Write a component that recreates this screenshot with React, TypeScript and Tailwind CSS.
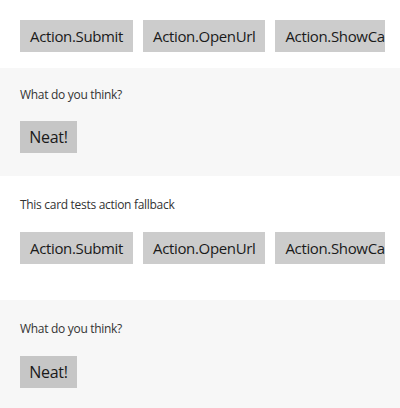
import React from "react";

const font = { fontFamily: '"Open Sans", "Noto Sans", sans-serif' };

function ActionRow() {
  return (
    <div className="flex gap-[10px] overflow-hidden w-[365px]">
      {["Action.Submit", "Action.OpenUrl", "Action.ShowCard"].map((t) => (
        <div
          key={t}
          className="shrink-0 h-[32px] px-[10px] flex items-center bg-[#cccccc] text-[15px] text-[#1a1a1a] whitespace-nowrap tracking-[-0.35px]"
        >
          {t}
        </div>
      ))}
    </div>
  );
}

function Question({ pt, mt }: { pt: string; mt: string }) {
  return (
    <div className={`h-full pl-[20px] flex flex-col ${pt}`}>
      <div className="text-[12px] leading-[16px] text-[#333333] tracking-[-0.3px]">What do you think?</div>
      <div className={`${mt} w-[57px] h-[32px] bg-[#c6c6c6] flex items-center justify-center text-[16px] text-[#1a1a1a] tracking-[-0.3px]`}>
        Neat!
      </div>
    </div>
  );
}

export default function App() {
  return (
    <div className="w-[400px] h-[408px] bg-white overflow-hidden" style={font}>
      <div className="h-[68px] pl-[20px] pt-[20px]">
        <ActionRow />
      </div>
      <div className="h-[108px] bg-[#f7f7f7]">
        <Question pt="pt-[19px]" mt="mt-[18px]" />
      </div>
      <div className="h-[124px] pl-[20px] pt-[21px]">
        <div className="text-[12px] leading-[16px] text-[#333333] tracking-[-0.3px]">This card tests action fallback</div>
        <div className="mt-[19px]">
          <ActionRow />
        </div>
      </div>
      <div className="h-[108px] bg-[#f7f7f7]">
        <Question pt="pt-[21px]" mt="mt-[19px]" />
      </div>
    </div>
  );
}
